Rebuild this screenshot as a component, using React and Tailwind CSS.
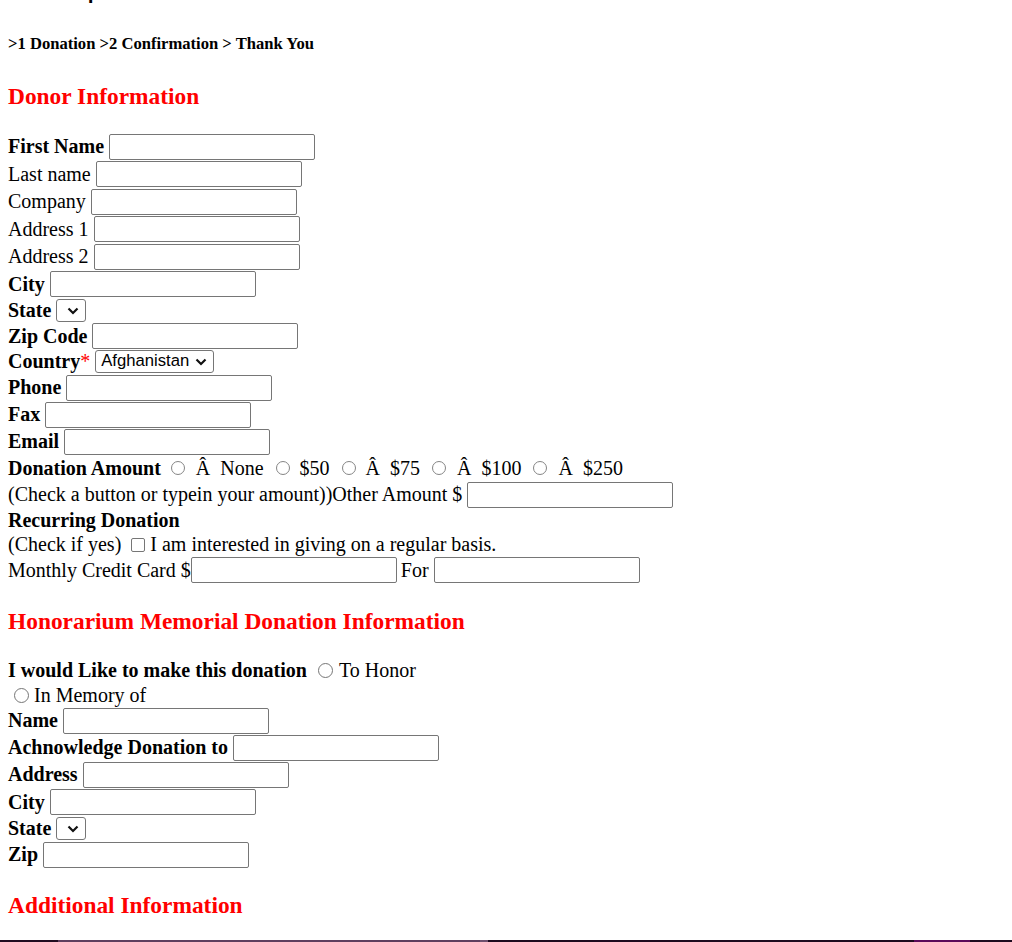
const Chevron = () => (
  <svg
    width="12"
    height="8"
    viewBox="0 0 12 8"
    className="pointer-events-none absolute right-[7px] top-1/2 -translate-y-1/2"
  >
    <path d="M1.5 1.5l4.5 4.5 4.5-4.5" fill="none" stroke="#111" strokeWidth="2.2" />
  </svg>
);

const Select = ({ className, children }) => (
  <span className="relative inline-flex shrink-0">
    <select
      className={`appearance-none h-[23px] rounded-[3px] border border-[#767676] bg-white font-['Liberation_Sans',Arial,sans-serif] text-[16.67px] leading-none text-black ${className}`}
    >
      {children}
    </select>
    <Chevron />
  </span>
);

const TextInput = () => (
  <input
    type="text"
    className="h-[26px] w-[206px] shrink-0 rounded-[2px] border border-[#767676] bg-white px-[2px]"
  />
);

const Radio = ({ name, big }) => (
  <input
    type="radio"
    name={name}
    className={
      big
        ? 'appearance-none w-[15px] h-[15px] shrink-0 rounded-full border border-[#767676] bg-white'
        : 'appearance-none w-[14px] h-[14px] shrink-0 rounded-full border border-[#858585] bg-white'
    }
  />
);

const Heading = ({ children, className }) => (
  <h3 className={`text-[23.4px] leading-[27px] font-bold text-[#ff0000] ${className}`}>{children}</h3>
);

const Field = ({ label, bold, required, h, select }) => (
  <div className={`flex items-center ${h}`}>
    <span className={bold ? 'font-bold' : ''}>{label}</span>
    {required && <span className="text-[#ff0000]">*</span>}
    <span className="ml-[5px] flex">
      {select === 'state' && (
        <Select className="w-[30px]">
          <option value=""></option>
        </Select>
      )}
      {select === 'country' && (
        <Select className="w-[119px] pl-[5px]">
          <option>Afghanistan</option>
        </Select>
      )}
      {!select && <TextInput />}
    </span>
  </div>
);

const donorFields = [
  { label: 'First Name', bold: true, h: 'h-[27px]' },
  { label: 'Last name', h: 'h-[28px]' },
  { label: 'Company', h: 'h-[27px]' },
  { label: 'Address 1', h: 'h-[28px]' },
  { label: 'Address 2', h: 'h-[27px]' },
  { label: 'City', bold: true, h: 'h-[28px]' },
  { label: 'State', bold: true, h: 'h-[25px]', select: 'state' },
  { label: 'Zip Code', bold: true, h: 'h-[26px]' },
  { label: 'Country', bold: true, required: true, h: 'h-[25px]', select: 'country' },
  { label: 'Phone', bold: true, h: 'h-[27px]' },
  { label: 'Fax', bold: true, h: 'h-[27px]' },
  { label: 'Email', bold: true, h: 'h-[27px]' },
];

const honorFields = [
  { label: 'Name', bold: true, h: 'h-[27px]' },
  { label: 'Achnowledge Donation to', bold: true, h: 'h-[27px]' },
  { label: 'Address', bold: true, h: 'h-[27px]' },
  { label: 'City', bold: true, h: 'h-[28px]' },
  { label: 'State', bold: true, h: 'h-[25px]', select: 'state' },
  { label: 'Zip', bold: true, h: 'h-[27px]' },
];

export default function App() {
  return (
    <div className="min-h-screen bg-white text-black font-['Liberation_Serif','Times_New_Roman',serif] text-[20px] leading-[23px]">
      {/* line scrolled out above, only a descender peeks in */}
      <div className="h-[3px] overflow-hidden pl-[88px]">
        <p className="-mt-[19px] font-bold">p</p>
      </div>

      <div className="px-[8px]">
        <h5 className="mt-[30.5px] text-[16.6px] leading-[19px] font-bold">
          &gt;1 Donation &gt;2 Confirmation &gt; Thank You
        </h5>

        <Heading className="mt-[30px]">Donor Information</Heading>

        <div className="mt-[23.5px]">
          {donorFields.map((f) => (
            <Field key={f.label} {...f} />
          ))}

          <div className="flex items-center h-[26px]">
            <span className="font-bold">Donation Amount</span>
            <span className="ml-[10px] flex"><Radio name="amount" /></span>
            <span className="ml-[11px]">Â&nbsp; None</span>
            <span className="ml-[12px] flex"><Radio name="amount" /></span>
            <span className="ml-[10px]">$50</span>
            <span className="ml-[12px] flex"><Radio name="amount" /></span>
            <span className="ml-[10px]">Â&nbsp; $75</span>
            <span className="ml-[12px] flex"><Radio name="amount" /></span>
            <span className="ml-[11px]">Â&nbsp; $100</span>
            <span className="ml-[12px] flex"><Radio name="amount" /></span>
            <span className="ml-[11px]">Â&nbsp; $250</span>
          </div>

          <div className="flex items-center h-[27px]">
            <span>(Check a button or typein your amount))Other Amount $</span>
            <span className="ml-[5px] flex"><TextInput /></span>
          </div>

          <div className="flex items-center h-[24px] font-bold">Recurring Donation</div>

          <div className="flex items-center h-[25px]">
            <span>(Check if yes)</span>
            <input
              type="checkbox"
              className="ml-[10px] appearance-none w-[14px] h-[14px] shrink-0 rounded-[2px] border border-[#767676] bg-white"
            />
            <span className="ml-[5px]">I am interested in giving on a regular basis.</span>
          </div>

          <div className="flex items-center h-[26px]">
            <span>Monthly Credit Card $</span>
            <TextInput />
            <span className="ml-[4px]">For</span>
            <span className="ml-[5px] flex"><TextInput /></span>
          </div>
        </div>

        <Heading className="mt-[24.5px]">Honorarium Memorial Donation Information</Heading>

        <div className="mt-[23.5px]">
          <div className="flex items-center h-[25px]">
            <span className="font-bold">I would Like to make this donation</span>
            <span className="ml-[11px] flex"><Radio name="honor" big /></span>
            <span className="ml-[6px]">To Honor</span>
          </div>
          <div className="flex items-center h-[24px]">
            <span className="ml-[6px] flex"><Radio name="honor" big /></span>
            <span className="ml-[5px]">In Memory of</span>
          </div>

          {honorFields.map((f) => (
            <Field key={f.label} {...f} />
          ))}
        </div>

        <Heading className="mt-[23.5px]">Additional Information</Heading>
      </div>

      <div className="mt-[21.5px] flex h-[20px]">
        <div className="w-[58px] bg-[#200c20]"></div>
        <div className="w-[422px] bg-[#5e3e5e]"></div>
        <div className="w-[8px] bg-[#6e506e]"></div>
        <div className="w-[426px] bg-[#1c0a1e]"></div>
        <div className="w-[56px] bg-[#5a0a5a]"></div>
        <div className="flex-1 bg-[#1c0a1e]"></div>
      </div>
    </div>
  );
}
